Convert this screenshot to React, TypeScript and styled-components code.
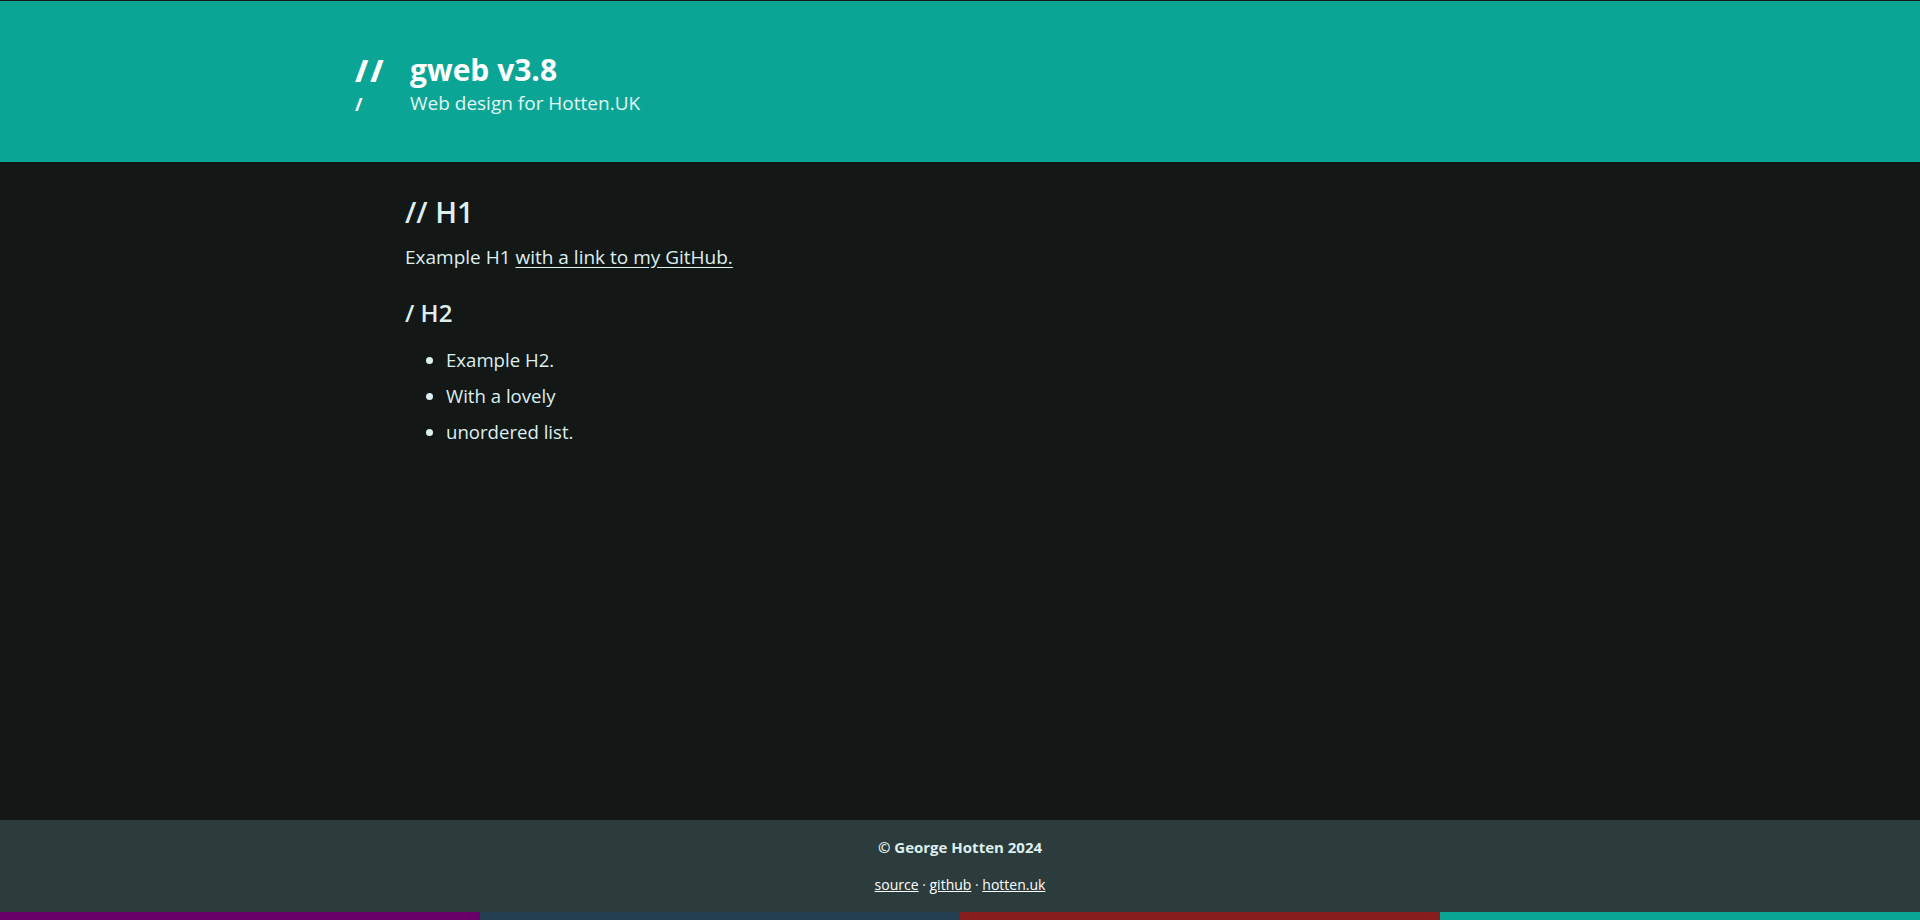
import React from "react";
import styled, { createGlobalStyle } from "styled-components";

const Global = createGlobalStyle`
  html, body { margin: 0; padding: 0; }
  body {
    background: #131716;
    color: #dcefee;
    font-family: "Open Sans", "Noto Sans", sans-serif;
  }
`;

const Page = styled.div`
  min-height: 920px;
  box-sizing: border-box;
  display: flex;
  flex-direction: column;
  border-top: 1px solid #131716;
`;

const Header = styled.header`
  background: #0ba596;
  height: 161px;
  display: flex;
  align-items: center;
`;

const HeaderInner = styled.div`
  display: flex;
  align-items: flex-start;
  padding: 7px 0 0 355px;
  color: #ffffff;
`;

const LogoColumn = styled.div`
  width: 55px;
  display: flex;
  flex-direction: column;
`;

const LogoBig = styled.div`
  font-size: 30px;
  font-weight: 800;
  line-height: 34px;
  letter-spacing: 2px;
`;

const LogoSmall = styled.div`
  margin-top: 3px;
  font-size: 18px;
  font-weight: 700;
  line-height: 26px;
`;

const Titles = styled.div`
  display: flex;
  flex-direction: column;
`;

const Title = styled.h1`
  margin: 0;
  font-size: 30px;
  font-weight: 700;
  line-height: 32px;
  color: #ffffff;
`;

const Subtitle = styled.div`
  margin-top: 4px;
  font-size: 19px;
  line-height: 26px;
  color: #e3f6f3;
`;

const Main = styled.main`
  flex: 1;
  padding: 32px 0 0 405px;
`;

const H1 = styled.h2`
  margin: 0 0 14px;
  font-size: 29px;
  font-weight: 600;
  line-height: 36px;
`;

const P = styled.p`
  margin: 0 0 28px;
  font-size: 19px;
  line-height: 26px;
`;

const Link = styled.a`
  color: #dcefee;
  text-decoration: underline;
  text-underline-offset: 3px;
`;

const H2 = styled.h3`
  margin: 0 0 14px;
  font-size: 24px;
  font-weight: 600;
  line-height: 30px;
`;

const List = styled.ul`
  margin: 0;
  padding-left: 41px;
`;

const Item = styled.li`
  font-size: 18.6px;
  line-height: 36px;
`;

const Footer = styled.footer`
  background: #2c3b3b;
  height: 92px;
  display: flex;
  flex-direction: column;
  align-items: center;
  padding-top: 17px;
  box-sizing: border-box;
  font-size: 14px;
`;

const Copy = styled.div`
  font-size: 15px;
  font-weight: 700;
  line-height: 20px;
  color: #dcefee;
`;

const FootLinks = styled.div`
  margin-top: 18px;
  line-height: 20px;
  color: #dcefee;
`;

const FootLink = styled.a`
  color: #ffffff;
  text-decoration: underline;
`;

const Strip = styled.div`
  display: flex;
  height: 8px;
`;

const Segment = styled.div<{ $c: string }>`
  flex: 1;
  background: ${(p) => p.$c};
`;

export default function App() {
  return (
    <>
      <Global />
      <Page>
        <Header>
          <HeaderInner>
            <LogoColumn>
              <LogoBig>//</LogoBig>
              <LogoSmall>/</LogoSmall>
            </LogoColumn>
            <Titles>
              <Title>gweb v3.8</Title>
              <Subtitle>Web design for Hotten.UK</Subtitle>
            </Titles>
          </HeaderInner>
        </Header>
        <Main>
          <H1>// H1</H1>
          <P>
            Example H1 <Link href="#">with a link to my GitHub.</Link>
          </P>
          <H2>/ H2</H2>
          <List>
            <Item>Example H2.</Item>
            <Item>With a lovely</Item>
            <Item>unordered list.</Item>
          </List>
        </Main>
        <Footer>
          <Copy>© George Hotten 2024</Copy>
          <FootLinks>
            <FootLink href="#">source</FootLink> · <FootLink href="#">github</FootLink> ·{" "}
            <FootLink href="#">hotten.uk</FootLink>
          </FootLinks>
        </Footer>
        <Strip>
          <Segment $c="#660066" />
          <Segment $c="#253f52" />
          <Segment $c="#861c1c" />
          <Segment $c="#0ba596" />
        </Strip>
      </Page>
    </>
  );
}
